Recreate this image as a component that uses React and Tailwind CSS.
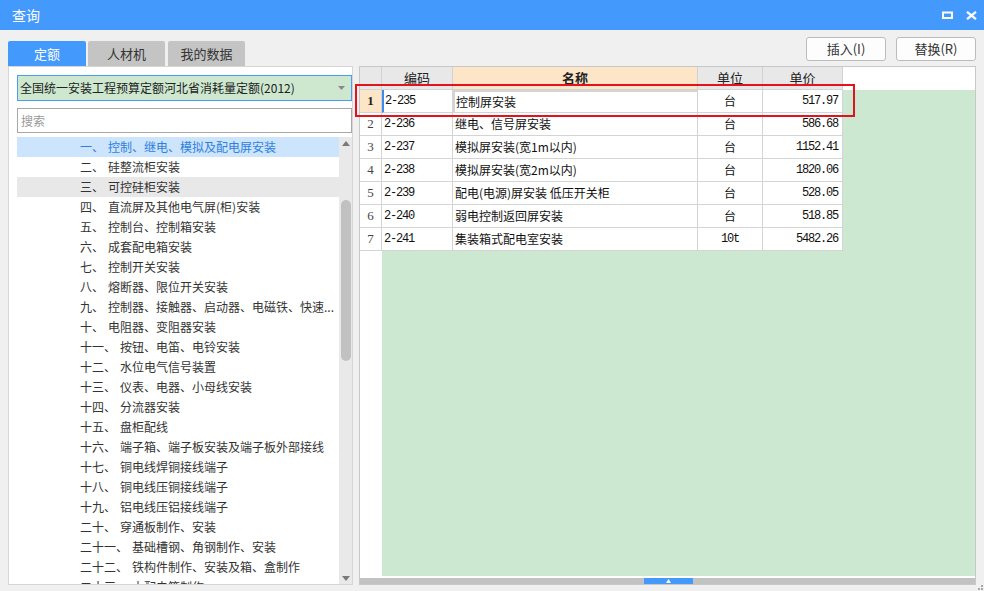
import React from "react";

const chapters = [
  ["一", "控制、继电、模拟及配电屏安装"],
  ["二", "硅整流柜安装"],
  ["三", "可控硅柜安装"],
  ["四", "直流屏及其他电气屏(柜)安装"],
  ["五", "控制台、控制箱安装"],
  ["六", "成套配电箱安装"],
  ["七", "控制开关安装"],
  ["八", "熔断器、限位开关安装"],
  ["九", "控制器、接触器、启动器、电磁铁、快速..."],
  ["十", "电阻器、变阻器安装"],
  ["十一", "按钮、电笛、电铃安装"],
  ["十二", "水位电气信号装置"],
  ["十三", "仪表、电器、小母线安装"],
  ["十四", "分流器安装"],
  ["十五", "盘柜配线"],
  ["十六", "端子箱、端子板安装及端子板外部接线"],
  ["十七", "铜电线焊铜接线端子"],
  ["十八", "铜电线压铜接线端子"],
  ["十九", "铝电线压铝接线端子"],
  ["二十", "穿通板制作、安装"],
  ["二十一", "基础槽钢、角钢制作、安装"],
  ["二十二", "铁构件制作、安装及箱、盒制作"],
  ["二十三", "木配电箱制作"],
];

const rows = [
  { code: "2-235", name: "控制屏安装", unit: "台", price: "517.97" },
  { code: "2-236", name: "继电、信号屏安装", unit: "台", price: "586.68" },
  { code: "2-237", name: "模拟屏安装(宽1m以内)", unit: "台", price: "1152.41" },
  { code: "2-238", name: "模拟屏安装(宽2m以内)", unit: "台", price: "1820.06" },
  { code: "2-239", name: "配电(电源)屏安装 低压开关柜", unit: "台", price: "528.05" },
  { code: "2-240", name: "弱电控制返回屏安装", unit: "台", price: "518.85" },
  { code: "2-241", name: "集装箱式配电室安装", unit: "10t", price: "5482.26" },
];

const mono = "font-['Liberation_Mono','Noto_Sans_CJK_SC',monospace] text-[12px] tracking-[-1.2px] text-[#111]";

const LeftPanel = () => (
  <div className="w-[345px] flex flex-col pt-[11px]">
    <div className="flex h-[25px] text-[13px]">
      <div className="w-[78px] rounded-t-[2px] bg-[#4499fd] text-white flex items-center justify-center">
        定额
      </div>
      <div className="w-[77px] ml-[2px] rounded-t-[2px] bg-[#c4c4c4] text-[#333] flex items-center justify-center">
        人材机
      </div>
      <div className="w-[77px] ml-[3px] rounded-t-[2px] bg-[#c4c4c4] text-[#333] flex items-center justify-center">
        我的数据
      </div>
    </div>
    <div className="h-[519px] bg-white border border-[#d6d6d6] pl-[8px] pt-[8px] flex flex-col overflow-hidden">
      <div className="h-[26px] shrink-0 border border-[#4a9cf8] bg-[#cde8cf] flex items-center pl-[2px] pr-[6px] text-[12px] text-[#222]">
        <span className="flex-1">全国统一安装工程预算定额河北省消耗量定额(2012)</span>
        <svg width="7" height="4" viewBox="0 0 7 4">
          <path d="M0 0h7L3.5 4z" fill="#8a8a8a" />
        </svg>
      </div>
      <div className="h-[25px] shrink-0 mt-[7px] border border-[#a8a8a8] flex items-center pl-[3px] text-[12px] text-[#9a9a9a]">
        搜索
      </div>
      <div className="flex mt-[4px] flex-1 min-h-0">
        <div className="w-[322px] overflow-hidden">
          {chapters.map(([num, name], i) => (
            <div
              key={num}
              className={
                "h-[20px] flex items-center pl-[63px] text-[12px] whitespace-nowrap " +
                (i === 0
                  ? "bg-[#cce4fc] text-[#2f7fe0]"
                  : i === 2
                  ? "bg-[#e8e8e8] text-[#333]"
                  : "text-[#333]")
              }
            >
              <span>{num}、</span>
              <span className="ml-[4px]">{name}</span>
            </div>
          ))}
        </div>
        <div className="w-[13px] bg-[#e9e9e9] relative">
          <svg className="absolute left-[3px] top-[4px]" width="8" height="5" viewBox="0 0 8 5">
            <path d="M4 0L8 5H0z" fill="#7a7a7a" />
          </svg>
          <div className="absolute left-[2px] top-[63px] w-[10px] h-[161px] rounded-full bg-[#c1c1c1]" />
          <svg className="absolute left-[3px] bottom-[3px]" width="8" height="5" viewBox="0 0 8 5">
            <path d="M0 0h8L4 5z" fill="#7a7a7a" />
          </svg>
        </div>
      </div>
    </div>
  </div>
);

const headCell = "h-full flex items-center justify-center border-r border-b border-[#d2d2d2] text-[13px] text-[#222]";
const cell = "h-full flex items-center border-r border-b border-[#d4d4d4] bg-white";

const ResultTable = () => (
  <div className="h-[519px] bg-white border border-[#c8c8c8] flex flex-col">
    <div className="flex h-[23px] shrink-0">
      <div className={headCell + " w-[22px] bg-[#e8e8e8]"} />
      <div className={headCell + " w-[71px] bg-[#e8e8e8]"}>编码</div>
      <div className={headCell + " w-[245px] bg-[#fde6c8] font-bold"}>名称</div>
      <div className={headCell + " w-[65px] bg-[#e8e8e8]"}>单位</div>
      <div className={headCell + " w-[80px] bg-[#e8e8e8]"}>单价</div>
      <div className="flex-1 bg-white" />
    </div>
    <div className="flex flex-1 min-h-0">
      <div className="w-[22px] bg-white">
        {rows.map((r, i) => (
          <div
            key={r.code}
            className={
              "h-[23px] flex items-center justify-center border-r border-b border-[#d4d4d4] font-['Liberation_Serif',serif] text-[13px] " +
              (i === 0 ? "bg-[#fde6c8] font-bold text-[#222]" : "text-[#444]")
            }
          >
            {i + 1}
          </div>
        ))}
      </div>
      <div className="flex-1 bg-[#cde8d0]">
        {rows.map((r, i) => (
          <div key={r.code} className="flex h-[23px]">
            <div
              className={
                cell + " w-[71px] " + mono + (i === 0 ? " pl-[1px] border-l-2 border-l-[#3c8cf0]" : " pl-[2px]")
              }
            >
              {r.code}
            </div>
            <div
              className={
                cell +
                " w-[245px] text-[12px] text-[#111]" +
                (i === 0 ? " pl-[1px] border-2 border-[#808080]" : " pl-[2px]")
              }
            >
              {r.name}
            </div>
            <div className={cell + " w-[65px] justify-center text-[12px] text-[#111] " + (r.unit === "10t" ? mono : "")}>
              {r.unit}
            </div>
            <div className={cell + " w-[80px] justify-end pr-[4px] " + mono}>{r.price}</div>
          </div>
        ))}
      </div>
    </div>
    <div className="h-[2px] shrink-0 bg-white" />
    <div className="h-[6px] shrink-0 bg-[#c2c2c2] relative">
      <div className="absolute left-[284px] top-0 w-[49px] h-[6px] bg-[#4499fd] flex items-center justify-center">
        <svg width="5" height="4" viewBox="0 0 5 4">
          <path d="M2.5 0L5 4H0z" fill="#fff" />
        </svg>
      </div>
    </div>
  </div>
);

export default function App() {
  return (
    <div className="w-[984px] h-[591px] bg-[#f0f0f0] relative overflow-hidden font-['Noto_Sans_CJK_SC',sans-serif]">
      <div className="h-[30px] bg-[#4499fd] flex items-center pl-[12px] pr-[7px] text-white">
        <span className="text-[14px] flex-1">查询</span>
        <svg width="11" height="8" viewBox="0 0 11 8" className="mr-[13px]">
          <rect x="1" y="1.5" width="9" height="5.5" fill="none" stroke="#fff" strokeWidth="2" />
        </svg>
        <svg width="11" height="9" viewBox="0 0 11 9">
          <path d="M1 0.8L10 8.2M10 0.8L1 8.2" stroke="#fff" strokeWidth="2.2" />
        </svg>
      </div>
      <div className="flex px-[8px] gap-[6px]">
        <LeftPanel />
        <div className="w-[619px] flex flex-col pt-[7px]">
          <div className="flex justify-end gap-[10px] h-[24px] text-[13px] text-[#333]">
            <button className="w-[80px] h-full bg-[#fdfdfd] border border-[#bcbcbc] rounded-[3px]">插入(I)</button>
            <button className="w-[80px] h-full bg-[#fdfdfd] border border-[#bcbcbc] rounded-[3px]">替换(R)</button>
          </div>
          <div className="mt-[5px]">
            <ResultTable />
          </div>
        </div>
      </div>
      <div className="absolute left-[355px] top-[84px] w-[500px] h-[33px] border-2 border-[#e3121c]" />
      <div className="absolute right-[1px] bottom-[1px] grid grid-cols-2 gap-[1px]">
        <div className="w-[2px] h-[2px]" />
        <div className="w-[2px] h-[2px] bg-[#a8a8a8]" />
        <div className="w-[2px] h-[2px] bg-[#a8a8a8]" />
        <div className="w-[2px] h-[2px] bg-[#a8a8a8]" />
      </div>
    </div>
  );
}
